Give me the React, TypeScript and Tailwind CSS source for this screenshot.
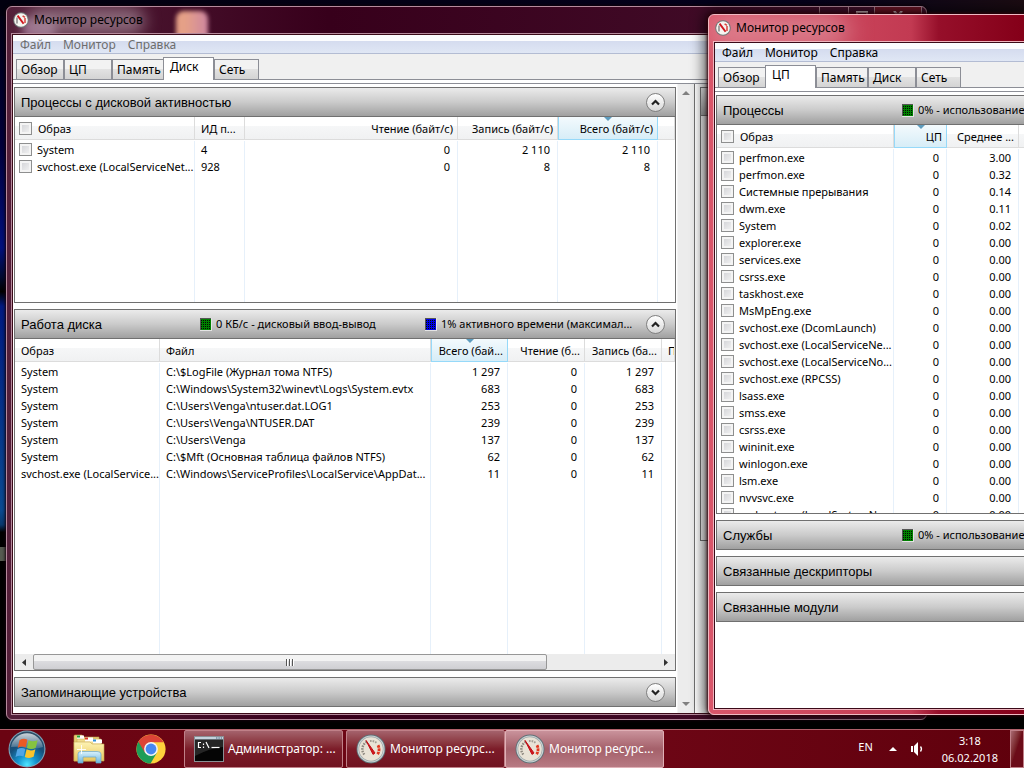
import type { ReactNode } from 'react';
import clsx from 'clsx';

type Column = {
  title: string;
  width?: number;
  numeric?: boolean;
  sorted?: boolean;
};

const diskProcessColumns: Column[] = [
  { title: 'Образ', width: 180 },
  { title: 'ИД п...', width: 50 },
  { title: 'Чтение (байт/с)', width: 213, numeric: true },
  { title: 'Запись (байт/с)', width: 100, numeric: true },
  { title: 'Всего (байт/с)', width: 100, numeric: true, sorted: true },
  { title: '' },
];

const diskProcesses = [
  ['System', '4', '0', '2 110', '2 110', ''],
  ['svchost.exe (LocalServiceNet...', '928', '0', '8', '8', ''],
];

const diskActivityColumns: Column[] = [
  { title: 'Образ', width: 145 },
  { title: 'Файл', width: 271 },
  { title: 'Всего (бай...', width: 77, numeric: true, sorted: true },
  { title: 'Чтение (б...', width: 77, numeric: true },
  { title: 'Запись (ба...', width: 77, numeric: true },
  { title: 'Приоритет' },
];

const diskActivity = [
  ['System', 'C:\\$LogFile (Журнал тома NTFS)', '1 297', '0', '1 297', ''],
  ['System', 'C:\\Windows\\System32\\winevt\\Logs\\System.evtx', '683', '0', '683', ''],
  ['System', 'C:\\Users\\Venga\\ntuser.dat.LOG1', '253', '0', '253', ''],
  ['System', 'C:\\Users\\Venga\\NTUSER.DAT', '239', '0', '239', ''],
  ['System', 'C:\\Users\\Venga', '137', '0', '137', ''],
  ['System', 'C:\\$Mft (Основная таблица файлов NTFS)', '62', '0', '62', ''],
  ['svchost.exe (LocalService...', 'C:\\Windows\\ServiceProfiles\\LocalService\\AppDat...', '11', '0', '11', ''],
];

const cpuColumns: Column[] = [
  { title: 'Образ', width: 177 },
  { title: 'ЦП', width: 53, numeric: true, sorted: true },
  { title: 'Среднее ...', width: 72, numeric: true },
  { title: '' },
];

const cpuProcesses = [
  ['perfmon.exe', '0', '3.00', ''],
  ['perfmon.exe', '0', '0.32', ''],
  ['Системные прерывания', '0', '0.14', ''],
  ['dwm.exe', '0', '0.11', ''],
  ['System', '0', '0.02', ''],
  ['explorer.exe', '0', '0.00', ''],
  ['services.exe', '0', '0.00', ''],
  ['csrss.exe', '0', '0.00', ''],
  ['taskhost.exe', '0', '0.00', ''],
  ['MsMpEng.exe', '0', '0.00', ''],
  ['svchost.exe (DcomLaunch)', '0', '0.00', ''],
  ['svchost.exe (LocalServiceNe...', '0', '0.00', ''],
  ['svchost.exe (LocalServiceNo...', '0', '0.00', ''],
  ['svchost.exe (RPCSS)', '0', '0.00', ''],
  ['lsass.exe', '0', '0.00', ''],
  ['smss.exe', '0', '0.00', ''],
  ['csrss.exe', '0', '0.00', ''],
  ['wininit.exe', '0', '0.00', ''],
  ['winlogon.exe', '0', '0.00', ''],
  ['lsm.exe', '0', '0.00', ''],
  ['nvvsvc.exe', '0', '0.00', ''],
  ['svchost.exe (LocalSystemNe...', '0', '0.00', ''],
];

function GaugeIcon() {
  return (
    <svg viewBox="0 0 30 30" className="h-[30px] w-[30px] shrink-0" aria-hidden="true">
      <circle cx="15" cy="15" r="14.5" fill="#5f7076" />
      <circle cx="15" cy="15" r="13.6" fill="#c9d3d5" />
      <circle cx="15" cy="15" r="12.4" fill="#9aa3a4" />
      <circle cx="15" cy="15" r="11.8" fill="#e9e3d6" />
      <path d="M8.3 20.5 A8.2 8.2 0 0 1 11 7.8" fill="none" stroke="#8f8a80" strokeWidth="2.4" strokeDasharray="1.6 1" />
      <path d="M14 7 A8.2 8.2 0 0 1 21 9.4" fill="none" stroke="#a39e94" strokeWidth="2" strokeDasharray="1.6 1" />
      <path d="M22 11.3 A8.2 8.2 0 0 1 21.2 20.6" fill="none" stroke="#e2371f" strokeWidth="2.8" strokeDasharray="2.6 .7" />
      <path d="M10 6.4 L19 19 L17 20.4 Z" fill="#d3141c" stroke="#c01018" strokeWidth="1" />
    </svg>
  );
}

function SmallGaugeIcon() {
  return (
    <svg viewBox="0 0 16 16" className="relative h-4 w-4 shrink-0" aria-hidden="true">
      <circle cx="8" cy="8" r="7.8" fill="#707878" />
      <circle cx="8" cy="8" r="6.8" fill="#f6f4f0" />
      <path d="M4 11.5 V5.5" stroke="#777" strokeWidth="1.3" />
      <path d="M12 11 V6 M9.6 3.8 L12 5.4" stroke="#d8453f" strokeWidth="1.5" />
      <path d="M4.6 3.6 L10.6 11.8" stroke="#cf1820" strokeWidth="1.9" />
    </svg>
  );
}

function StartOrb() {
  return (
    <svg viewBox="0 0 38 38" className="h-[38px] w-[38px]" aria-hidden="true">
      <defs>
        <radialGradient id="orb" cx=".5" cy=".95" r=".9">
          <stop offset="0" stopColor="#4fe6ff" />
          <stop offset=".3" stopColor="#1594cf" />
          <stop offset=".65" stopColor="#16507c" />
          <stop offset="1" stopColor="#2d4d66" />
        </radialGradient>
        <linearGradient id="orbGloss" x1="0" y1="0" x2="0" y2="1">
          <stop offset="0" stopColor="#fff" stopOpacity=".75" />
          <stop offset="1" stopColor="#fff" stopOpacity=".15" />
        </linearGradient>
      </defs>
      <circle cx="19" cy="19" r="18.5" fill="#7fa3b8" />
      <circle cx="19" cy="19" r="17.4" fill="url(#orb)" />
      <path d="M3 17 A16.2 16.2 0 0 1 35 17 Q27 20 19 18 T3 17 Z" fill="url(#orbGloss)" />
      <path d="M11.5 10.3 Q15.5 7.6 19.4 9.8 L17.7 17.4 Q13.8 15.6 9.7 17.9 Z" fill="#ea5a25" />
      <path d="M20.6 10.3 Q24.8 12.4 29.6 10.2 L27.8 17.7 Q23.4 20 18.9 17.9 Z" fill="#86c340" />
      <path d="M9.3 19.3 Q13.4 17 17.3 18.9 L15.5 26.5 Q11.6 24.6 7.5 26.9 Z" fill="#51a5e6" />
      <path d="M18.6 19.3 Q23 21.6 27.4 19.2 L25.6 26.8 Q21.2 29 16.8 26.9 Z" fill="#fcc42c" />
    </svg>
  );
}

function ExplorerIcon() {
  return (
    <svg viewBox="0 0 32 30" className="h-[30px] w-8" aria-hidden="true">
      <defs>
        <linearGradient id="folder" x1="0" y1="0" x2="0" y2="1">
          <stop offset="0" stopColor="#fdf3b4" />
          <stop offset="1" stopColor="#e9c65c" />
        </linearGradient>
        <linearGradient id="stand" x1="0" y1="0" x2="0" y2="1">
          <stop offset="0" stopColor="#d9f1fb" />
          <stop offset="1" stopColor="#6bb5dd" />
        </linearGradient>
      </defs>
      <path d="M1 2 Q1 1 2 1 H9 L11 3 H26 V27 H1 Z" fill="#e6cd76" stroke="#b89a48" strokeWidth=".6" />
      <rect x="4" y="1.5" width="7" height="4" fill="#fff" />
      <rect x="4" y="1.5" width="3" height="2" fill="#22a53a" />
      <path d="M4 5 H28 V27 H4 Z" fill="#f0db8c" stroke="#c3a653" strokeWidth=".5" />
      <rect x="12" y="3.5" width="8" height="4" fill="#fff" />
      <rect x="12" y="3.5" width="3" height="2" fill="#d8392b" />
      <rect x="20" y="5.5" width="9" height="4" fill="#fff" />
      <rect x="20" y="5.5" width="3" height="2" fill="#2f8fd8" />
      <path d="M1 8 H17 L19 10 H31 V27 H1 Z" fill="url(#folder)" stroke="#c8aa55" strokeWidth=".6" />
      <path d="M5 29 V20 Q5 17.5 8 17.5 H24 Q28 17.5 28 20 V29 H23 V23 H10 V29 Z" fill="url(#stand)" stroke="#65a6cb" strokeWidth=".7" />
      <path d="M8.5 11 V20 M4 15.5 H13" stroke="#fff" strokeWidth=".9" />
    </svg>
  );
}

function ChromeIcon() {
  return (
    <svg viewBox="0 0 30 30" className="h-[30px] w-[30px]" aria-hidden="true">
      <circle cx="15" cy="15" r="14.6" fill="#fdd23c" />
      <path d="M15 15 L2.4 7.7 A14.6 14.6 0 0 0 14.6 29.6 L21 18.5 Z" fill="#1e9d58" />
      <path d="M15 15 L8.8 18.5 L2.4 7.7 A14.6 14.6 0 0 1 27.6 8.2 H15 Z" fill="#dc4437" />
      <circle cx="15" cy="15" r="6.9" fill="#f4f4f4" />
      <circle cx="15" cy="15" r="5.4" fill="#4688f1" />
    </svg>
  );
}

function ConsoleIcon() {
  return (
    <svg viewBox="0 0 30 26" className="h-[26px] w-[30px] shrink-0" aria-hidden="true">
      <rect x=".5" y=".5" width="29" height="25" fill="#050505" stroke="#8a8f94" />
      <rect x="1" y="1" width="28" height="2.5" fill="#c4d2dd" />
      <path d="M22 2 H28" stroke="#44607c" strokeDasharray="1.4 1" />
      <path d="M1 4 H29 V11 Q16 12 1 20 Z" fill="#fff" opacity=".13" />
      <path d="M7 6.5 H4.5 V11.5 H7" fill="none" stroke="#fff" strokeWidth="1.2" />
      <path d="M9.5 7.5 V9 M9.5 10.5 V12 M12 6 L15 12" stroke="#fff" strokeWidth="1.2" />
      <path d="M17.5 11.5 H25.5" stroke="#fff" strokeWidth="1.2" />
    </svg>
  );
}

function Indicator({ color, children }: { color: 'green' | 'blue'; children: ReactNode }) {
  return (
    <span className="flex items-center gap-1 whitespace-nowrap">
      <svg viewBox="0 0 12 13" className="h-[13px] w-3 shrink-0" aria-hidden="true">
        <rect width="12" height="13" fill="#e4e4e4" />
        <rect width="11" height="12" fill="#555" />
        <rect x="1" y="1" width="10" height="11" fill={color === 'green' ? '#008000' : '#0000e8'} />
        <path
          d="M1 2.5H11M1 4.5H11M1 6.5H11M1 8.5H11M1 10.5H11"
          stroke="#001000"
          strokeDasharray="1 1"
        />
      </svg>
      {children}
    </span>
  );
}

function Section({ title, open, info, className, children }: {
  title: string;
  open?: boolean;
  info?: ReactNode;
  className?: string;
  children?: ReactNode;
}) {
  return (
    <section className={clsx('flex flex-col border border-[#707070] bg-white', className)}>
      <header className="flex h-7 shrink-0 items-center bg-linear-to-b from-[#ebebeb] via-[#cbcbcb] to-[#a0a0a0] pl-[6px] pr-[10px]">
        <h2 className="w-[179px] shrink-0 pt-[2px] whitespace-nowrap font-['Liberation_Sans',sans-serif] text-[13px]">{title}</h2>
        <div className="flex flex-1">{info}</div>
        <button
          aria-label={open ? 'Свернуть' : 'Развернуть'}
          className="flex h-[19px] w-[19px] items-center justify-center rounded-full border border-[#808080] bg-linear-to-b from-white to-[#d8d8d8]"
        >
          <svg viewBox="0 0 9 7" className="h-[7px] w-[9px]" aria-hidden="true">
            <path d={open ? 'M1 5.5 L4.5 2 L8 5.5' : 'M1 1.5 L4.5 5 L8 1.5'} fill="none" stroke="#222" strokeWidth="2.2" />
          </svg>
        </button>
      </header>
      {children}
    </section>
  );
}

function Checkbox({ label }: { label: string }) {
  return (
    <input
      type="checkbox"
      aria-label={label}
      className="h-[13px] w-[13px] shrink-0 appearance-none border border-[#8e8f8f] bg-linear-to-br from-[#cfd0d4] to-[#f6f6f6] shadow-[inset_0_0_0_2px_#f4f4f4]"
    />
  );
}

function DataTable({ columns, rows, checkable }: { columns: Column[]; rows: string[][]; checkable?: boolean }) {
  return (
    <div className="min-h-0 flex-1 overflow-hidden border-t border-[#707070]">
      <table className="h-full w-full table-fixed border-separate border-spacing-0 text-left">
        <colgroup>
          {columns.map((col, i) => (
            <col key={i} style={{ width: col.width }} />
          ))}
        </colgroup>
        <thead>
          <tr className="h-6">
            {columns.map((col, i) => (
              <th key={i} className="h-6 p-0 align-top font-normal">
                <div
                  className={clsx(
                    'relative flex h-[23px] items-center gap-[6px] overflow-hidden whitespace-nowrap border-b border-r pt-px',
                    col.sorted
                      ? 'border-l border-[#96d9f9] bg-linear-to-b from-[#f3fafd] to-[#d7edf7]'
                      : 'border-[#dcdcdc] bg-linear-to-b from-white from-40% via-[#f6f7f8] via-40% to-[#f0f1f2]',
                    col.numeric ? 'justify-end pr-1' : i === 0 && checkable ? 'pl-1' : 'pl-[6px]'
                  )}
                >
                  {i === 0 && checkable && <Checkbox label="Выбрать все" />}
                  {col.title}
                  {col.sorted && (
                    <svg viewBox="0 0 8 4" className="absolute top-0 left-1/2 h-1 w-2 -translate-x-1/2" aria-hidden="true">
                      <path d="M0 0 H8 L4 4 Z" fill="#5d9cbe" />
                    </svg>
                  )}
                </div>
              </th>
            ))}
          </tr>
        </thead>
        <tbody>
          {rows.map((row, r) => (
            <tr key={r} className="h-[17px]">
              {row.map((cell, i) => (
                <td key={i} className="h-[17px] overflow-hidden border-r border-[#e6f0fa] p-0 last:border-r-0">
                  <div
                    className={clsx(
                      'flex h-[17px] items-center gap-[5px] whitespace-nowrap',
                      columns[i].numeric ? 'justify-end pr-[7px]' : i === 0 && checkable ? 'pl-1' : 'pl-[6px]'
                    )}
                  >
                    {i === 0 && checkable && <Checkbox label={cell} />}
                    {cell}
                  </div>
                </td>
              ))}
            </tr>
          ))}
          {/* stretches the column lines down to the bottom */}
          <tr>
            {columns.map((_, i) => (
              <td key={i} className="border-r border-[#e6f0fa] p-0 last:border-r-0"></td>
            ))}
          </tr>
        </tbody>
      </table>
    </div>
  );
}

function HorizontalScrollbar() {
  return (
    <div className="flex h-4 shrink-0 items-stretch bg-[#ececec]">
      <button aria-label="Влево" className="flex w-[18px] items-center justify-center">
        <svg viewBox="0 0 4 7" className="h-[7px] w-1" aria-hidden="true"><path d="M4 0 V7 L0 3.5 Z" fill="#333" /></svg>
      </button>
      <div className="flex flex-1">
        <div className="flex w-[514px] items-center justify-center gap-px rounded-[2px] border border-[#979797] bg-linear-to-b from-[#f3f3f3] from-45% via-[#dcdcdf] via-45% to-[#cfcfd3]">
          <span className="h-[7px] w-[2px] border-r border-white bg-[#555]"></span>
          <span className="h-[7px] w-[2px] border-r border-white bg-[#555]"></span>
          <span className="h-[7px] w-[2px] border-r border-white bg-[#555]"></span>
        </div>
      </div>
      <button aria-label="Вправо" className="flex w-[18px] items-center justify-center">
        <svg viewBox="0 0 4 7" className="h-[7px] w-1" aria-hidden="true"><path d="M0 0 V7 L4 3.5 Z" fill="#333" /></svg>
      </button>
    </div>
  );
}

function VerticalScrollbar() {
  return (
    <div className="flex w-[17px] shrink-0 flex-col justify-between border-l border-[#f4f4f4] bg-[#ececec]">
      <button aria-label="Вверх" className="flex h-[18px] items-center justify-center">
        <svg viewBox="0 0 8 4" className="h-1 w-2" aria-hidden="true"><path d="M0 4 H8 L4 0 Z" fill="#808080" /></svg>
      </button>
      <button aria-label="Вниз" className="flex h-[18px] items-center justify-center">
        <svg viewBox="0 0 8 4" className="h-1 w-2" aria-hidden="true"><path d="M0 0 H8 L4 4 Z" fill="#808080" /></svg>
      </button>
    </div>
  );
}

function CaptionButtons() {
  return (
    <div className="flex h-[18px] self-start overflow-hidden rounded-b border border-t-0 border-[#a8808e] text-[#e0d0d6]">
      <button aria-label="Свернуть окно" className="flex w-[29px] items-center justify-center border-r border-[#a8808e]">
        <svg viewBox="0 0 12 9" className="h-[9px] w-3"><path d="M1 6 H11 V8 H1 Z" fill="currentColor" /></svg>
      </button>
      <button aria-label="Развернуть окно" className="flex w-[26px] items-center justify-center border-r border-[#a8808e]">
        <svg viewBox="0 0 12 9" className="h-[9px] w-3"><path d="M1 1 H11 V8 H1 Z" fill="none" stroke="currentColor" strokeWidth="2" /></svg>
      </button>
      <button aria-label="Закрыть окно" className="flex w-[46px] items-center justify-center bg-[#6d1526]">
        <svg viewBox="0 0 12 9" className="h-[9px] w-3"><path d="M2 0 L10 9 M10 0 L2 9" stroke="currentColor" strokeWidth="2.4" /></svg>
      </button>
    </div>
  );
}

function MonitorWindow({ active, activeTab, className, children }: {
  active?: boolean;
  activeTab: string;
  className: string;
  children: ReactNode;
}) {
  const tabs = [
    { title: 'Обзор', width: 'w-12' },
    { title: 'ЦП', width: 'w-12' },
    { title: 'Память', width: 'w-[52px]' },
    { title: 'Диск', width: 'w-12' },
    { title: 'Сеть', width: 'w-[45px]' },
  ];

  return (
    <div
      className={clsx(
        'absolute flex flex-col overflow-hidden rounded-md border px-1 pb-1',
        active
          ? 'border-[#f0b9c2] bg-[linear-gradient(90deg,#d9566a,#c23a52_22%,#960f2a_25%,#850019_34%)] shadow-[0_0_3px_1px_#300008,0_0_14px_4px_rgba(0,0,0,0.65)]'
          : 'border-[#b58a9c] bg-linear-to-r from-[#54203a] via-[#37001b] via-35% to-[#45122d] shadow-[0_0_3px_1px_#10000a]',
        className
      )}
    >
      <div className="relative flex h-[26px] shrink-0 items-center gap-[5px] pl-[2px]">
        {/* blurred shapes showing through the glass */}
        {active ? (
          <span className="absolute -left-1 top-0 h-8 w-[140px] rounded-full bg-[#e0949f]/70 blur-md"></span>
        ) : (
          <>
            <span className="absolute left-3 top-3 h-5 w-8 bg-[#c79cbf]/60 blur-xs"></span>
            <span className="absolute left-4 top-0 h-7 w-[118px] rounded-full bg-[#a58a98]/70 blur-sm"></span>
            <span className="absolute left-[165px] top-1 h-8 w-8 rounded-t-lg bg-linear-to-r from-[#e5a087] from-30% to-[#ce86a0] blur-[2px]"></span>
          </>
        )}
        <SmallGaugeIcon />
        <h1 className="relative flex-1 text-[12px] text-black">Монитор ресурсов</h1>
        <CaptionButtons />
      </div>
      <div className={clsx('relative flex min-h-0 flex-1 flex-col border', active ? 'border-[#efb4be]' : 'border-[#b58a9c]')}>
        <div className="flex min-h-0 flex-1 flex-col border border-[#3a0a18] bg-white">
          <nav
            className={clsx(
              'flex h-[19px] shrink-0 items-center gap-3 border-b border-[#b3bcd3] bg-linear-to-b from-[#fbfcfe] from-35% via-[#d5dcef] via-35% to-[#e0e7f5] pt-[2px] pl-[7px] text-[12px]',
              active ? 'text-black' : 'text-[#6d6d6d]'
            )}
          >
            <button>Файл</button>
            <button>Монитор</button>
            <button>Справка</button>
          </nav>
          <div role="tablist" className="flex h-[26px] shrink-0 items-end border-b border-[#8c8e96] bg-[#f0f0f0] pl-[3px] text-[12px]">
            {tabs.map((tab) => (
              <button
                key={tab.title}
                role="tab"
                aria-selected={tab.title === activeTab}
                className={clsx(
                  'border border-b-0 border-[#8c8e96] text-left whitespace-nowrap',
                  tab.title === activeTab
                    ? 'z-10 -mb-px -ml-px h-[23px] w-[51px] bg-white pb-1 pl-[6px]'
                    : ['h-5 bg-linear-to-b from-[#f2f2f2] from-45% via-[#e3e3e3] via-45% to-[#d4d4d4] pl-1', tab.width]
                )}
              >
                {tab.title}
              </button>
            ))}
          </div>
          <div className="h-1 shrink-0 border-b border-[#8c8e96]"></div>
          <div className="flex min-h-0 flex-1">{children}</div>
        </div>
      </div>
    </div>
  );
}

function TaskButton({ icon, active, children }: { icon: ReactNode; active?: boolean; children: ReactNode }) {
  return (
    <button
      className={clsx(
        'flex h-[38px] w-[159px] items-center gap-1 rounded-xs border px-[9px] text-[12px] whitespace-nowrap text-white',
        active
          ? 'border-[#e0b0b6] bg-linear-to-b from-[#c9929b] via-[#a4606a] to-[#b77a83]'
          : 'border-[#c08088] bg-linear-to-b from-[#a4626c] via-[#7c1c29] to-[#701320]'
      )}
    >
      {icon}
      {children}
    </button>
  );
}

export default function App() {
  return (
    <div className="flex h-screen flex-col overflow-hidden bg-black font-['Noto_Sans',sans-serif] text-[11px] leading-4 text-black">
      <main className="relative min-h-0 flex-1 overflow-hidden bg-[linear-gradient(180deg,#02000f,#00003a_20%,#00107c_34%,#000a30_38%,#000_40%,#001a80_42%,#0a4a90_70%,#08386c_72%,#000_73%,#000_75%,#555a50_75%,#555a50_77%,#000_77%)]">
        <div className="absolute inset-x-0 top-0 h-4 bg-linear-to-r from-[#02000f] via-[#04001c] via-75% to-[#1c0c12]"></div>

        <MonitorWindow activeTab="Диск" className="top-[6px] right-[97px] bottom-[9px] left-[6px]">
          <div className="flex w-[664px] shrink-0 flex-col gap-[6px] pt-[3px] pr-px pb-[6px] pl-px">
            <Section title="Процессы с дисковой активностью" open className="h-[216px] shrink-0">
              <DataTable columns={diskProcessColumns} rows={diskProcesses} checkable />
            </Section>
            <Section
              title="Работа диска"
              open
              className="min-h-0 flex-1"
              info={
                <>
                  <div className="w-[225px] shrink-0">
                    <Indicator color="green">0 КБ/с - дисковый ввод-вывод</Indicator>
                  </div>
                  <Indicator color="blue">1% активного времени (максимал...</Indicator>
                </>
              }
            >
              <DataTable columns={diskActivityColumns} rows={diskActivity} />
              <HorizontalScrollbar />
            </Section>
            <Section title="Запоминающие устройства" className="shrink-0" />
          </div>
          <VerticalScrollbar />
          <aside className="flex flex-1 border-l border-[#707070] bg-linear-to-r from-white to-[#e4e4e4] to-[12px] pt-[3px] pl-[5px]">
            <div className="h-[454px] flex-1 border border-[#707070]">
              <div className="h-7 border-b border-[#707070] bg-linear-to-b from-[#ebebeb] to-[#a0a0a0]"></div>
            </div>
          </aside>
        </MonitorWindow>

        <MonitorWindow active activeTab="ЦП" className="top-[14px] bottom-[14px] left-[708px] w-[921px]">
          <div className="flex w-[664px] shrink-0 flex-col gap-[6px] pt-[3px] pr-px pb-[6px] pl-px">
            <Section
              title="Процессы"
              open
              className="h-[419px] shrink-0"
              info={<Indicator color="green">0% - использование ЦП</Indicator>}
            >
              <DataTable columns={cpuColumns} rows={cpuProcesses} checkable />
            </Section>
            <Section title="Службы" className="shrink-0" info={<Indicator color="green">0% - использование ЦП</Indicator>} />
            <Section title="Связанные дескрипторы" className="shrink-0" />
            <Section title="Связанные модули" className="shrink-0" />
          </div>
        </MonitorWindow>
      </main>

      <footer className="flex h-[39px] shrink-0 items-center border-t border-[#b0606a] bg-linear-to-r from-[#6b0412] via-[#6e0716] via-60% to-[#60000c] pl-2 text-white">
        <button aria-label="Пуск" className="mr-[27px]"><StartOrb /></button>
        <button aria-label="Проводник" className="mr-[31px]"><ExplorerIcon /></button>
        <button aria-label="Google Chrome" className="mr-[18px]"><ChromeIcon /></button>
        <div className="flex">
          <div className="mr-[3px]">
            <TaskButton icon={<ConsoleIcon />}>Администратор: ...</TaskButton>
          </div>
          <TaskButton icon={<GaugeIcon />}>Монитор ресурс...</TaskButton>
          <TaskButton active icon={<GaugeIcon />}>Монитор ресурс...</TaskButton>
        </div>
        <div className="ml-auto flex items-center self-stretch text-[11px]">
          <button className="mr-4 pb-1">EN</button>
          <button aria-label="Скрытые значки" className="mr-[14px]">
            <svg viewBox="0 0 8 4" className="h-1 w-2"><path d="M0 4 H8 L4 0 Z" fill="#fff" /></svg>
          </button>
          <button aria-label="Громкость" className="mr-[18px]">
            <svg viewBox="0 0 13 14" className="h-[14px] w-[13px]">
              <path d="M0 4 H2 V10 H0 Z M3 4 L7 0 V14 L3 10 Z" fill="#fff" />
              <path d="M9.5 4.5 Q11.5 7 9.5 9.5" fill="none" stroke="#fff" strokeWidth="1.3" />
            </svg>
          </button>
          <time className="mr-3 text-center leading-[17px]">
            3:18
            <br />
            06.02.2018
          </time>
          <button
            aria-label="Свернуть все окна"
            className="w-[14px] self-stretch border border-[#c08088] bg-linear-to-br from-[#a86a72] to-[#6b0b18] to-50%"
          ></button>
        </div>
      </footer>
    </div>
  );
}
